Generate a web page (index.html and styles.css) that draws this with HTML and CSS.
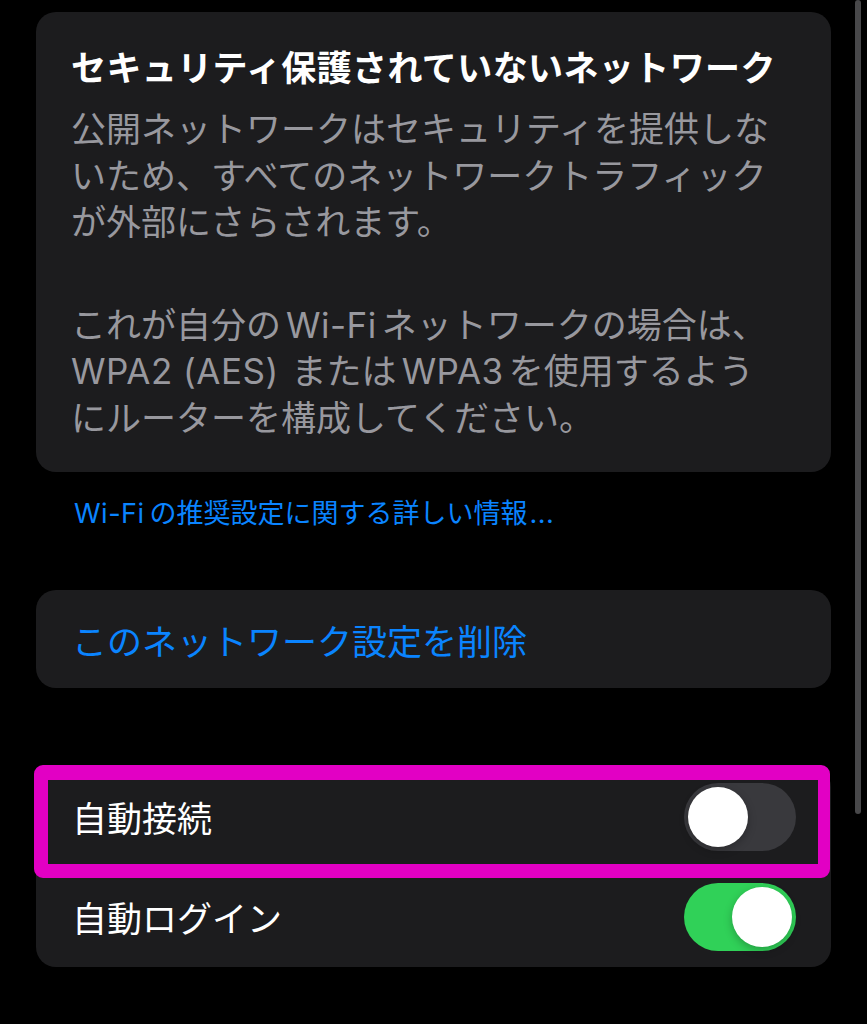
FILE: index.html
```
<!DOCTYPE html>
<html lang="ja">
<head>
<meta charset="utf-8">
<link rel="stylesheet" href="styles.css">
</head>
<body>
<div class="page">
  <section class="card info">
    <h1 class="title">セキュリティ保護されていないネットワーク</h1>
    <p class="body">公開ネットワークはセキュリティを提供しな<br>いため、すべてのネットワークトラフィック<br>が外部にさらされます。</p>
    <p class="body para2">これが自分の<span class="lat">Wi-Fi</span>ネットワークの場合は、<br><span class="lat lead">WPA2 (AES)</span> または<span class="lat">WPA3</span>を使用するよう<br>にルーターを構成してください。</p>
  </section>
  <div class="link"><span class="lat lead">Wi-Fi</span>の推奨設定に関する詳しい情報<span class="lat end">...</span></div>
  <section class="card action">
    <span class="action-text">このネットワーク設定を削除</span>
  </section>
  <section class="card toggles">
    <div class="row">
      <span class="row-label">自動接続</span>
      <span class="switch off"><span class="knob"></span></span>
    </div>
    <div class="row">
      <span class="row-label">自動ログイン</span>
      <span class="switch on"><span class="knob"></span></span>
    </div>
    <div class="highlight"></div>
  </section>
</div>
<div class="scrollbar"></div>
</body>
</html>
```
FILE: styles.css
```
html, body {
  margin: 0;
  padding: 0;
  background: #000;
}
body {
  width: 867px;
  height: 1024px;
  overflow: hidden;
  font-family: "Noto Sans CJK JP", "Noto Sans", sans-serif;
  color: #fff;
}
.page {
  padding: 12px 36px 0 36px;
  display: flex;
  flex-direction: column;
}
.card {
  background: #1c1c1e;
  border-radius: 20px;
}
.info {
  padding: 31px 20px 33px 35px;
}
.title {
  margin: 0;
  font-size: 35px;
  line-height: 46px;
  font-weight: 700;
  color: #fff;
  letter-spacing: 0.4px;
}
.body {
  margin: 15px 0 0 0;
  font-size: 35px;
  line-height: 46.5px;
  color: #98989e;
  font-weight: 400;
}
.body.para2 {
  margin-top: 56px;
}
.lat {
  font-family: "Inter", "Noto Sans", sans-serif;
  margin: 0 5px;
  line-height: 1;
  letter-spacing: 0.5px;
}
.lat.lead {
  margin-left: 0;
}
.lat.end {
  margin-right: 0;
  margin-left: 2px;
}
.link {
  margin-top: 23px;
  padding-left: 38px;
  font-size: 27px;
  line-height: 34px;
  color: #0a84ff;
}
.action {
  margin-top: 61px;
  height: 98px;
  display: flex;
  align-items: center;
  padding-left: 36px;
}
.action-text {
  font-size: 35px;
  line-height: 46px;
  color: #0a84ff;
  position: relative;
  top: 1px;
}
.toggles {
  margin-top: 79px;
  position: relative;
}
.row {
  height: 100px;
  display: flex;
  align-items: center;
  justify-content: space-between;
  padding: 0 35px 0 36px;
}
.row-label {
  font-size: 35px;
  line-height: 46px;
  color: #fff;
}
.switch {
  width: 112px;
  height: 68px;
  border-radius: 34px;
  position: relative;
  display: block;
}
.switch.off {
  background: #39393d;
}
.switch.on {
  background: #30d158;
}
.knob {
  position: absolute;
  top: 4px;
  width: 60px;
  height: 60px;
  border-radius: 50%;
  background: #fff;
  box-shadow: 0 3px 8px rgba(0, 0, 0, 0.25);
}
.switch.off .knob {
  left: 4px;
}
.switch.on .knob {
  right: 4px;
}
.highlight {
  position: absolute;
  left: -2px;
  top: -2px;
  width: 796px;
  height: 113px;
  box-sizing: border-box;
  border: 14px solid #e200c4;
  border-top-width: 15px;
  border-right-width: 12px;
  border-radius: 9px;
}
.scrollbar {
  position: fixed;
  top: 0;
  left: 855px;
  width: 6px;
  height: 814px;
  border-radius: 3px;
  background: #48484a;
}
```
